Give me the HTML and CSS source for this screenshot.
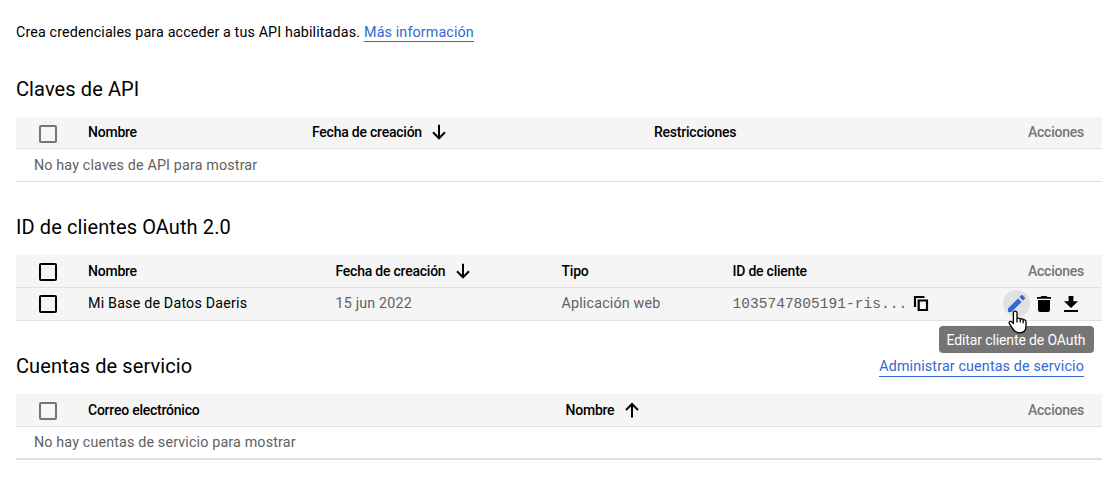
FILE: index.html
```html
<!DOCTYPE html>
<html lang="es">
<head>
<meta charset="utf-8">
<title>Credenciales</title>
<link rel="stylesheet" href="styles.css">
</head>
<body>
<main class="page">
  <p class="intro"><span class="intro-text">Crea credenciales para acceder a tus API habilitadas.</span><a class="link more">Más información</a></p>

  <section class="section keys">
    <h2 class="title"><span>Claves de API</span></h2>
    <div class="row head">
      <span class="check muted"></span>
      <span class="cell strong">Nombre</span>
      <span class="cell strong"><span>Fecha de creación</span><svg class="arrow" viewBox="0 0 14 16"><path d="M7 .8V14M1 8.3l6 6 6-6"/></svg></span>
      <span class="cell strong">Restricciones</span>
      <span class="cell actions-label">Acciones</span>
    </div>
    <div class="row empty"><span>No hay claves de API para mostrar</span></div>
  </section>

  <section class="section clients">
    <h2 class="title"><span>ID de clientes OAuth 2.0</span></h2>
    <div class="row head">
      <span class="check"></span>
      <span class="cell strong">Nombre</span>
      <span class="cell strong"><span>Fecha de creación</span><svg class="arrow" viewBox="0 0 14 16"><path d="M7 .8V14M1 8.3l6 6 6-6"/></svg></span>
      <span class="cell strong">Tipo</span>
      <span class="cell strong">ID de cliente</span>
      <span class="cell actions-label">Acciones</span>
    </div>
    <div class="row item">
      <span class="check"></span>
      <span class="cell name">Mi Base de Datos Daeris</span>
      <span class="cell date">15 jun 2022</span>
      <span class="cell type">Aplicación web</span>
      <span class="cell id"><span class="mono">1035747805191-ris...</span><svg class="copy" viewBox="0 0 16 17"><path d="M2 12V2h9.500"/><path d="M5.700 5.500h8.300v9.500H5.700z"/></svg></span>
      <span class="cell actions">
        <span class="edit">
          <svg class="pencil" viewBox="3 3 18 18"><path d="M3 17.250V21h3.750L17.400 10.350l-3.750-3.750zM20.710 7.040a1 1 0 0 0 0-1.410l-2.340-2.340a1 1 0 0 0-1.410 0l-1.830 1.830 3.750 3.750z"/></svg>
          <svg class="pointer" viewBox="0 0 19 24"><path d="M7.200 1.200c1.100 0 1.800.8 1.800 1.900v5.700c.5-1 2.900-.9 3.300.4.900-.8 2.700-.4 2.900.8 1.300-.6 2.800.1 2.800 1.600v4.600c0 4-2.500 6.600-6.600 6.600-3 0-4.800-1.100-6-3.200L1.400 13.700c-.8-1.600.8-2.900 2.200-1.900l1.800 1.500V3.100c0-1.100.7-1.900 1.800-1.900z"/><path d="M9 8.500v4M12.300 9.500v3M15.200 10.200v3"/></svg>
          <span class="tooltip"><span>Editar cliente de OAuth</span></span>
        </span>
        <svg class="trash" viewBox="0 0 14 16"><path d="M1 4h12v10a2 2 0 0 1-2 2H3a2 2 0 0 1-2-2zM0 .9h3.600L4.500 0h5l.9.900H14v1.900H0z"/></svg>
        <svg class="download" viewBox="0 0 14 16"><path d="M4.600 0h4.800v5.200H14l-7 6.700-7-6.700h4.600zM0 14h14v2H0z"/></svg>
      </span>
    </div>
  </section>

  <section class="section accounts">
    <h2 class="title"><span>Cuentas de servicio</span><a class="link manage">Administrar cuentas de servicio</a></h2>
    <div class="row head">
      <span class="check muted"></span>
      <span class="cell strong">Correo electrónico</span>
      <span class="cell strong"><span>Nombre</span><svg class="arrow" viewBox="0 0 14 16"><path d="M7 15.500V2M1 8l6-6 6 6"/></svg></span>
      <span class="cell actions-label">Acciones</span>
    </div>
    <div class="row empty last"><span>No hay cuentas de servicio para mostrar</span></div>
  </section>
</main>
</body>
</html>
```
FILE: styles.css
```css
* { box-sizing: border-box; }
body {
  margin: 0;
  background: #fff;
  color: #000;
  font: 400 14.3px/20px Roboto, "Liberation Sans", sans-serif;
}
.page { width: 1102px; padding: 22px 0 0 16px; }
.intro { display: flex; height: 20px; gap: 4px; margin: 0 0 35px; letter-spacing: .13px; white-space: nowrap; }
.link { height: 20px; border-bottom: 1px solid #3367d6; color: #3367d6; white-space: nowrap; }
.title { display: flex; justify-content: space-between; height: 24px; margin: 0; padding-right: 18px; font-size: 20px; font-weight: 400; line-height: 24px; letter-spacing: .1px; }
.title .link { margin-top: 2px; height: 21px; font-size: 14.3px; line-height: 21px; letter-spacing: .14px; }
.row { display: grid; border-bottom: 1px solid #e0e0e0; white-space: nowrap; }
.head, .item { height: 33px; background: #f5f5f5; }
.head { margin-top: 16px; }
.keys { height: 138px; }
.keys .head { height: 32px; grid-template-columns: 72px 224px 342px 1fr auto; }
.clients { height: 139px; }
.clients .row { grid-template-columns: 72px 247.500px 226px 171px 1fr auto; }
.accounts .head { grid-template-columns: 72px 477.500px 1fr auto; }
.empty { height: 33px; padding: 6px 0 0 18px; color: #616161; letter-spacing: .15px; }
.last { padding-top: 5px; border-bottom-width: 2px; }
.check { width: 18px; height: 18px; margin: 8px 0 0 23px; border: 2px solid #000; border-radius: 2px; }
.item .check { margin-top: 7px; }
.muted { border-color: #757575; }
.cell { display: flex; align-items: flex-start; padding-top: 6px; }
.keys .head .cell { padding-top: 5px; }
.strong { font-size: 14px; font-weight: 500; letter-spacing: -.23px; }
.item .cell { padding-top: 5px; color: #616161; letter-spacing: .18px; }
.item .name { color: #000; }
.actions-label { padding-right: 18px; color: #757575; font-size: 14px; font-weight: 500; letter-spacing: -.23px; }
.arrow { width: 14px; height: 16px; margin: 2px 0 0 10.500px; fill: none; stroke: #000; stroke-width: 2; }
.mono { padding-top: 1px; font-family: "Liberation Mono", monospace; font-size: 14.500px; letter-spacing: .03px; }
.copy { width: 16px; height: 17px; margin: 2px 0 0 6px; fill: none; stroke: #000; stroke-width: 2.200; }
.item .actions { padding: 2px 24.500px 0 0; }
.edit { position: relative; width: 27px; height: 27px; margin-right: 7px; padding: 5px; border-radius: 50%; background: #e0e0e0; }
.pencil { display: block; width: 17px; height: 17px; fill: #3367d6; }
.pointer { position: absolute; z-index: 2; left: 5px; top: 20px; width: 19px; height: 24px; fill: #fff; stroke: #000; stroke-width: 1.300; }
.tooltip { position: absolute; z-index: 1; top: 36px; right: -64px; width: 155px; height: 27px; border-radius: 4px; background: #757575; color: #fff; font-size: 14px; font-weight: 400; line-height: 28px; letter-spacing: -.12px; text-align: center; }
.trash, .download { width: 14px; height: 16px; margin-top: 6px; }
.trash { margin-right: 13px; }
```
